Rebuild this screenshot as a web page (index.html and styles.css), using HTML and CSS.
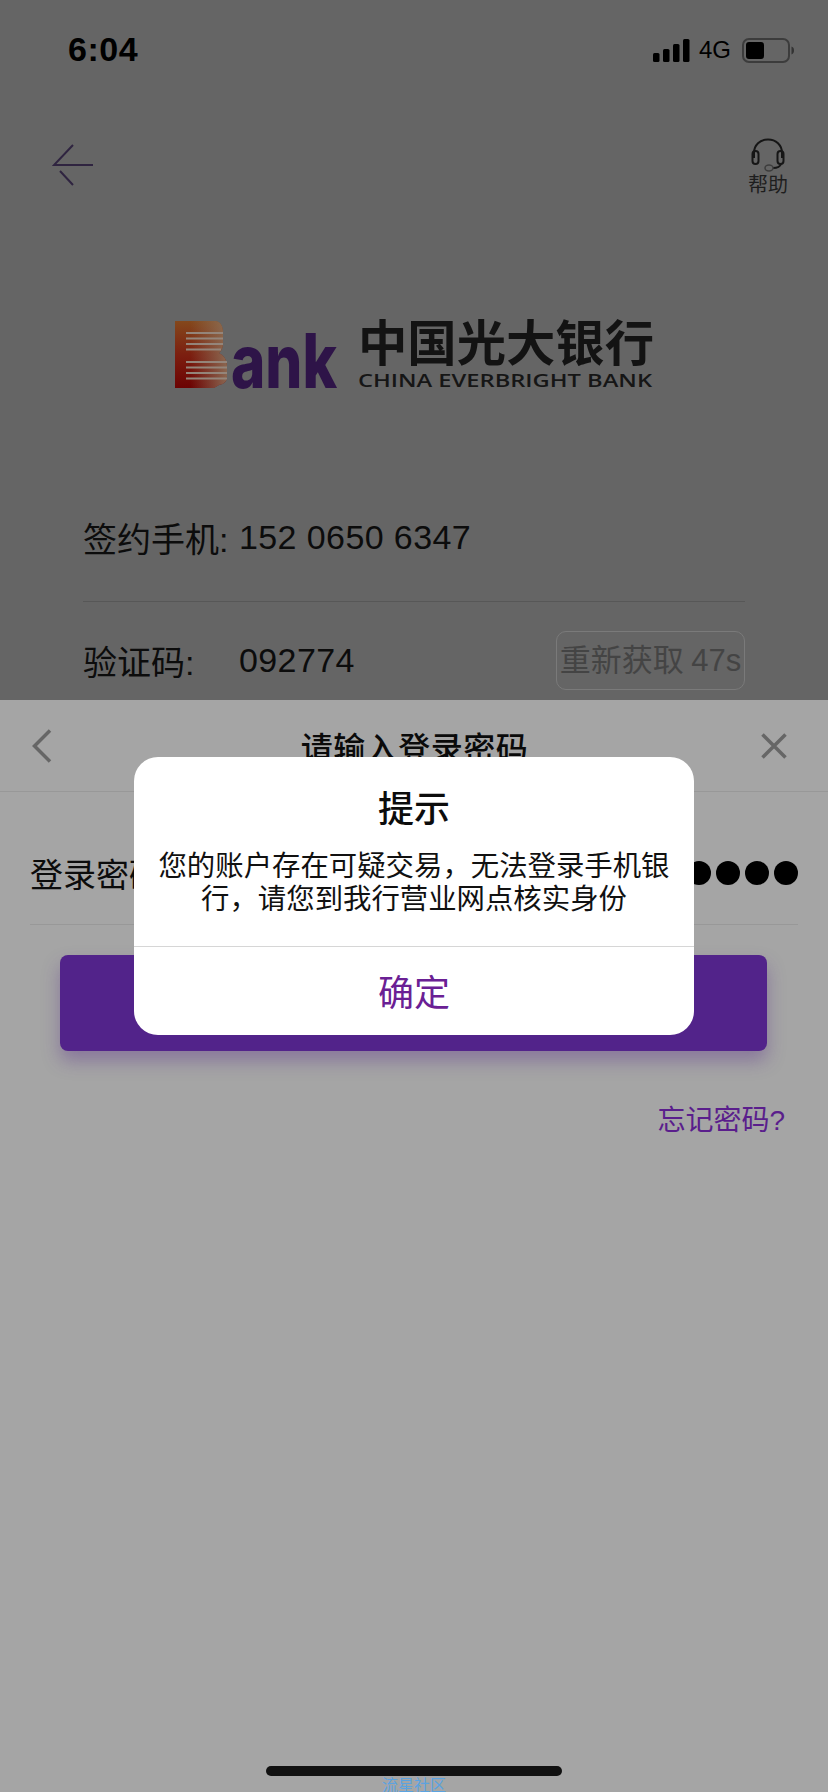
FILE: index.html
```html
<!DOCTYPE html>
<html>
  <head>
    <meta charset="utf-8">
    <title>中国光大银行</title>
    <link rel="stylesheet" href="styles.css">
  </head>
  <body>
    <div id="page">
      <div id="top">
        <div class="status">
          <span class="time">6:04</span>
          <div class="status-right">
            <svg class="signal" width="37" height="23" viewBox="0 0 37 23">
              <rect x="0" y="14" width="6.5" height="9" rx="1.5" fill="#000"/>
              <rect x="10" y="10" width="6.5" height="13" rx="1.5" fill="#000"/>
              <rect x="20" y="5" width="6.5" height="18" rx="1.5" fill="#000"/>
              <rect x="30" y="0" width="6.5" height="23" rx="1.5" fill="#000"/>
            </svg>
            <span class="net">4G</span>
            <svg class="battery" width="52" height="25" viewBox="0 0 52 25">
              <rect x="1" y="1" width="46" height="23" rx="6" fill="none" stroke="#3c3c3c" stroke-width="2"/>
              <rect x="4" y="4" width="18" height="17" rx="3" fill="#000"/>
              <path d="M49.5 8.5c2 .6 2.5 2.4 2.5 4s-.5 3.400-2.500 4z" fill="#333"/>
            </svg>
          </div>
        </div>
        <div class="nav">
          <svg class="back" width="42" height="42" viewBox="0 0 42 42">
            <path d="M21 1 2 21h39M8 27l13 14" fill="none" stroke="#2f2440" stroke-width="2"/>
          </svg>
          <div class="help">
            <svg width="34" height="34" viewBox="0 0 34 34">
              <path d="M3 20V15C3 7 9 1.500 17 1.500S31 7 31 15v5" fill="none" stroke="#161616" stroke-width="2"/>
              <rect x="1.500" y="13" width="6" height="13" rx="3" fill="none" stroke="#161616" stroke-width="2"/>
              <rect x="26.500" y="13" width="6" height="13" rx="3" fill="none" stroke="#161616" stroke-width="2"/>
              <path d="M30 26c-1 3-4 4-8 4" fill="none" stroke="#161616" stroke-width="2"/>
              <ellipse cx="18" cy="30" rx="4" ry="3" fill="none" stroke="#3d3d3d" stroke-width="1.500"/>
            </svg>
            <span>帮助</span>
          </div>
        </div>
        <svg class="logo" width="482" height="110" viewBox="0 -20 482 110">
          <defs>
            <linearGradient id="bfill" x1="0" y1="0" x2="0" y2="1">
              <stop offset="0" stop-color="#84481c"/>
              <stop offset="0.5" stop-color="#7c1f10"/>
              <stop offset="1" stop-color="#6c0303"/>
            </linearGradient>
            <linearGradient id="bfade" x1="0" y1="0" x2="1" y2="0">
              <stop offset="0.3" stop-color="#8c7058" stop-opacity="0"/>
              <stop offset="1" stop-color="#8c7058" stop-opacity="0.9"/>
            </linearGradient>
          </defs>
          <path d="M1 2H42Q48 3 49 12V24Q49 31 45 34Q53 38 53 47V57Q53 65 45 66L40 69H1Z" fill="url(#bfill)"/>
          <path d="M1 2H42Q48 3 49 12V24Q49 31 45 34Q53 38 53 47V57Q53 65 45 66L40 69H1Z" fill="url(#bfade)"/>
          <g fill="#94857a">
            <rect x="12" y="13" width="37" height="2"/>
            <rect x="12" y="18.500" width="37" height="2"/>
            <rect x="12" y="24" width="37" height="2"/>
            <rect x="12" y="29.500" width="35" height="2"/>
            <rect x="12" y="42" width="41" height="2"/>
            <rect x="12" y="47.500" width="41" height="2"/>
            <rect x="12" y="53" width="41" height="2"/>
            <rect x="12" y="58.500" width="41" height="2"/>
          </g>
          <text class="logo-ank" x="57" y="69" textLength="106" lengthAdjust="spacingAndGlyphs">ank</text>
          <text class="logo-cn" x="184" y="42" textLength="296" lengthAdjust="spacingAndGlyphs">中国光大银行</text>
          <text class="logo-en" x="184" y="68" textLength="294" lengthAdjust="spacingAndGlyphs">CHINA EVERBRIGHT BANK</text>
        </svg>
        <div class="form">
          <div class="form-row phone-row">
            <span class="label">签约手机:</span>
            <span class="value">152 0650 6347</span>
          </div>
          <div class="form-row code-row">
            <span class="label">验证码:</span>
            <span class="value">092774</span>
            <span class="resend">重新获取 47s</span>
          </div>
        </div>
      </div>
      <div id="sheet">
        <div class="sheet-head">
          <svg width="20" height="34" viewBox="0 0 20 34">
            <path d="M18 1.500 2.500 17 18 32.500" fill="none" stroke="#666" stroke-width="3.500"/>
          </svg>
          <span class="sheet-title">请输入登录密码</span>
          <svg width="26" height="26" viewBox="0 0 26 26">
            <path d="M1.500 1.500l23 23M24.500 1.500l-23 23" fill="none" stroke="#666" stroke-width="3.500"/>
          </svg>
        </div>
        <div class="pwd-row">
          <span>登录密码</span>
          <div class="dots">
            <i></i><i></i><i></i><i></i><i></i><i></i>
          </div>
        </div>
        <div class="submit"></div>
        <div class="forgot">忘记密码?</div>
        <div class="foot">
          <div class="home-bar"></div>
          <div class="mark">流星社区</div>
        </div>
      </div>
      <div id="dialog">
        <div class="dialog-body">
          <div class="dialog-title">提示</div>
          <p>您的账户存在可疑交易&#65292;无法登录手机银行&#65292;请您到我行营业网点核实身份</p>
        </div>
        <div class="dialog-ok">确定</div>
      </div>
    </div>
  </body>
</html>
```
FILE: styles.css
```css
* {
  box-sizing: border-box;
}
html, body {
  margin: 0;
  padding: 0;
}
body {
  font-family: "Liberation Sans", "Noto Sans CJK SC", sans-serif;
  color: #0c0c0c;
}
svg {
  display: block;
}
#page {
  position: relative;
  width: 828px;
  height: 1792px;
  overflow: hidden;
  display: flex;
  flex-direction: column;
}
#top {
  height: 700px;
  flex: none;
  background: #656565;
  overflow: hidden;
}
.status {
  height: 100px;
  padding: 0 34px 0 68px;
  display: flex;
  align-items: center;
  justify-content: space-between;
}
.time {
  font-size: 34px;
  font-weight: bold;
  color: #000;
  letter-spacing: 0.5px;
  margin-top: -2px;
}
.status-right {
  display: flex;
  align-items: center;
}
.signal {
  margin-right: 9px;
}
.net {
  font-size: 24px;
  color: #000;
  width: 43px;
}
.nav {
  height: 56px;
  margin-top: 38px;
  padding: 6px 40px 0 52px;
  display: flex;
  justify-content: space-between;
  align-items: flex-start;
}
.help {
  margin-top: -6px;
  display: flex;
  flex-direction: column;
  align-items: center;
  font-size: 20px;
  line-height: 26px;
  color: #1e1e1e;
}
.logo {
  margin: 105px 0 0 174px;
}
.logo-ank {
  font-family: Inter, "Liberation Sans", sans-serif;
  font-size: 75px;
  font-weight: 800;
  fill: #2e1448;
}
.logo-cn {
  font-family: "Noto Sans CJK SC", sans-serif;
  font-size: 49px;
  font-weight: bold;
  fill: #131313;
}
.logo-en {
  font-family: "Open Sans", sans-serif;
  font-size: 18px;
  font-weight: 600;
  fill: #161616;
}
.form {
  margin: 64px 83px 0;
}
.form-row {
  display: flex;
  align-items: center;
  font-size: 34px;
}
.phone-row {
  height: 129px;
  border-bottom: 1px solid #575757;
}
.code-row {
  padding-top: 29px;
}
.label {
  width: 156px;
}
.value {
  letter-spacing: 0.4px;
}
.resend {
  margin-left: auto;
  width: 189px;
  height: 59px;
  line-height: 57px;
  text-align: center;
  font-size: 31px;
  white-space: nowrap;
  color: #444;
  border: 1px solid #7a7a7a;
  border-radius: 10px;
  word-spacing: -1px;
}
#sheet {
  flex: 1;
  background: #a5a5a5;
  display: flex;
  flex-direction: column;
}
.sheet-head {
  height: 92px;
  padding: 0 41px 0 32px;
  display: flex;
  align-items: center;
  justify-content: space-between;
  border-bottom: 1px solid #989898;
}
.sheet-title {
  margin-left: 16px;
  font-size: 32px;
  font-weight: 500;
  letter-spacing: 0.5px;
  color: #0a0a0a;
}
.pwd-row {
  height: 133px;
  margin: 0 30px;
  padding-top: 30px;
  display: flex;
  align-items: center;
  justify-content: space-between;
  font-size: 33px;
  border-bottom: 1px solid #989898;
}
.dots {
  display: flex;
  gap: 5px;
}
.dots i {
  display: block;
  width: 24px;
  height: 24px;
  border-radius: 50%;
  background: #000;
}
.submit {
  height: 96px;
  margin: 30px 61px 0 60px;
  flex: none;
  background: #52238a;
  border-radius: 8px;
  box-shadow: 0 10px 18px rgba(82, 35, 138, 0.35);
}
.forgot {
  margin: 50px 43px 0 0;
  text-align: right;
  font-size: 28px;
  line-height: 40px;
  color: #5a1e8c;
}
.foot {
  margin-top: auto;
  height: 26px;
  display: flex;
  flex-direction: column;
  align-items: center;
}
.home-bar {
  width: 296px;
  height: 10px;
  border-radius: 5px;
  background: #111;
  flex: none;
}
.mark {
  font-size: 16px;
  line-height: 20px;
  color: #5ba3e0;
}
#dialog {
  position: absolute;
  left: 134px;
  top: 757px;
  width: 560px;
  height: 278px;
  background: #fff;
  border-radius: 24px;
  display: flex;
  flex-direction: column;
}
.dialog-body {
  height: 190px;
  padding: 28px 22px 0;
  text-align: center;
  border-bottom: 1px solid #d6d6d6;
}
.dialog-title {
  font-size: 36px;
  font-weight: 500;
  line-height: 50px;
}
.dialog-body p {
  margin: 15px 0 0;
  font-size: 28.4px;
  line-height: 33px;
  color: #111;
}
.dialog-ok {
  flex: 1;
  padding-bottom: 2px;
  display: flex;
  align-items: center;
  justify-content: center;
  font-size: 36px;
  color: #6a2094;
}
```
